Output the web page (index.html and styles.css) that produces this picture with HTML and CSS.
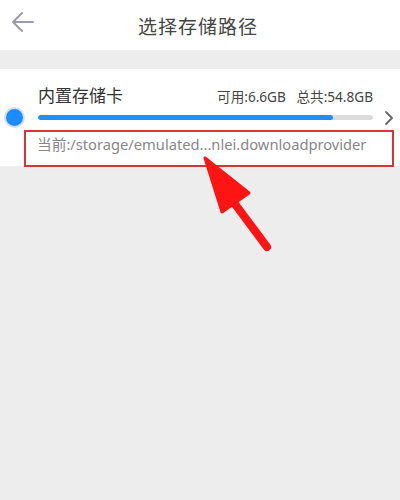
FILE: index.html
```html
<!DOCTYPE html>
<html lang="zh-CN">
<head>
    <meta charset="UTF-8">
    <meta name="viewport" content="width=device-width, initial-scale=1.0">
    <title>选择存储路径</title>
    <link rel="stylesheet" href="styles.css">
</head>
<body>
    <div class="header">
        <svg class="back" width="24" height="22" viewBox="0 0 24 22">
            <path d="M22 11H2M11 2L2 11L11 20" fill="none" stroke="#9b9bb0" stroke-width="2" stroke-linecap="round" stroke-linejoin="round"/>
        </svg>
        <h1>选择存储路径</h1>
    </div>

    <div class="card">
        <div class="radio"></div>
        <div class="info">
            <div class="top-row">
                <span class="name">内置存储卡</span>
                <span class="space">可用:6.6GB&nbsp;&nbsp;&nbsp;总共:54.8GB</span>
            </div>
            <div class="bar"><div class="fill" style="width: 88%;"></div></div>
        </div>
        <svg class="chevron" width="10" height="14" viewBox="0 0 10 14">
            <path d="M2 1L8 7L2 13" fill="none" stroke="#666" stroke-width="1.8" stroke-linecap="round" stroke-linejoin="round"/>
        </svg>
        <div class="path-box">当前:/storage/emulated...nlei.downloadprovider</div>
    </div>

    <svg class="pointer" width="400" height="500" viewBox="0 0 400 500">
        <line x1="267" y1="247" x2="229" y2="196" stroke="#ff1414" stroke-width="8" stroke-linecap="round"/>
        <polygon points="205,158 249,193 222,212" fill="#ff1414" stroke="#ff1414" stroke-width="3" stroke-linejoin="round"/>
    </svg>
</body>
</html>
```

FILE: styles.css
```css
body {
    margin: 0;
    width: 400px;
    height: 500px;
    background-color: #ededed;
    font-family: "Noto Sans CJK SC", "Noto Sans", sans-serif;
    position: relative;
    overflow: hidden;
}
.header {
    height: 50px;
    background-color: white;
    position: relative;
    display: flex;
    align-items: center;
    justify-content: center;
}
.header h1 {
    margin: 0;
    font-size: 19px;
    font-weight: normal;
    color: #444;
    letter-spacing: 1px;
    margin-left: -4px;
}
.back {
    position: absolute;
    left: 11px;
    top: 11px;
}
.card {
    margin-top: 19px;
    height: 97px;
    background-color: white;
    position: relative;
}
.radio {
    position: absolute;
    left: 4px;
    top: 38px;
    width: 17px;
    height: 17px;
    border-radius: 50%;
    background-color: #1a8cff;
    border: 2px solid #d8dde6;
}
.info {
    padding: 13px 27px 0 38px;
}
.top-row {
    display: flex;
    justify-content: space-between;
    align-items: baseline;
    height: 30px;
}
.name {
    font-size: 17px;
    color: #333;
}
.space {
    font-size: 13.6px;
    color: #444;
    font-family: "Noto Sans", "Noto Sans CJK SC", sans-serif;
}
.bar {
    margin-top: 3px;
    height: 5px;
    border-radius: 3px;
    background-color: #dcdcdc;
    overflow: hidden;
}
.fill {
    height: 100%;
    border-radius: 3px;
    background-color: #1e90f5;
}
.chevron {
    position: absolute;
    right: 6px;
    top: 42px;
}
.path-box {
    position: absolute;
    left: 24px;
    top: 61px;
    width: 355px;
    height: 33px;
    border: 2px solid #d9323a;
    padding-left: 11px;
    font-size: 14.7px;
    line-height: 24px;
    color: #888;
    font-family: "Noto Sans", "Noto Sans CJK SC", sans-serif;
}
.pointer {
    position: absolute;
    left: 0;
    top: 0;
}
```
